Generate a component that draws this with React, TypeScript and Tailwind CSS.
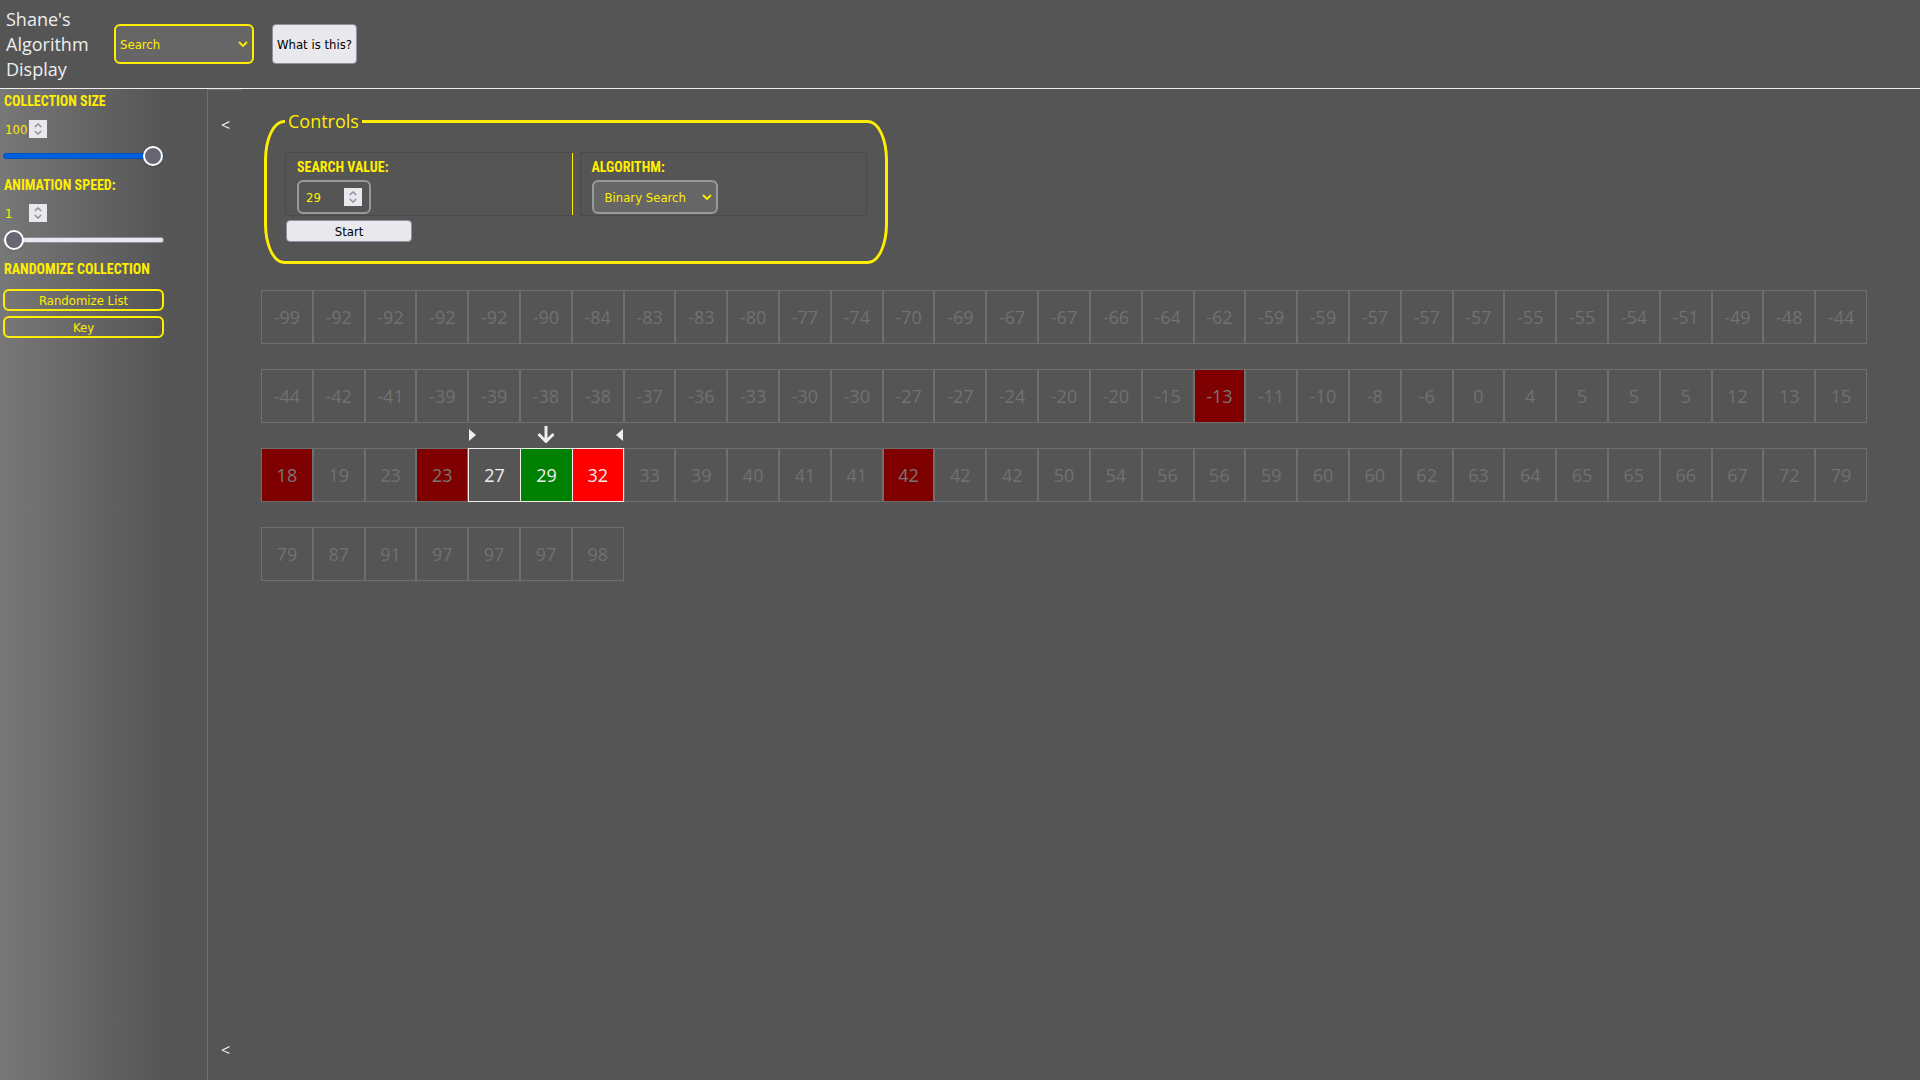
import { useState } from "react";

const values = [
  -99, -92, -92, -92, -92, -90, -84, -83, -83, -80, -77, -74, -70, -69, -67, -67, -66, -64, -62, -59, -59, -57, -57,
  -57, -55, -55, -54, -51, -49, -48, -44,
  -44, -42, -41, -39, -39, -38, -38, -37, -36, -33, -30, -30, -27, -27, -24, -20, -20, -15, -13, -11, -10, -8, -6, 0,
  4, 5, 5, 5, 12, 13, 15,
  18, 19, 23, 23, 27, 29, 32, 33, 39, 40, 41, 41, 42, 42, 42, 50, 54, 56, 56, 59, 60, 60, 62, 63, 64, 65, 65, 66, 67,
  72, 79,
  79, 87, 91, 97, 97, 97, 98,
];

const LOW = 66;
const MID = 67;
const HIGH = 68;
const visited = [49, 62, 65, 74];

function cellStyle(i: number) {
  if (i === LOW) return "border-y border-l border-[#eeeeee] text-[#eeeeee]";
  if (i === MID) return "border-y border-l border-[#eeeeee] bg-[#008000] text-[#eeeeee]";
  if (i === HIGH) return "border border-[#eeeeee] bg-[#ff0000] text-[#eeeeee]";
  if (visited.includes(i)) return "border border-[#6e6e6e] bg-[#7f0000] text-[#777777]";
  return "border border-[#6e6e6e] text-[#717171]";
}

const small = "font-['DejaVu_Sans_Condensed','DejaVu_Sans',sans-serif] text-[13px]";
const heading = "font-['Roboto_Condensed','Roboto',sans-serif] text-[14px] font-bold uppercase text-[#ffee00]";

function Chevron({ className }: { className: string }) {
  return (
    <svg viewBox="0 0 10 6" className={className} fill="none" stroke="currentColor" strokeWidth="1.8" aria-hidden="true">
      <path d="M1 1l4 4 4-4" />
    </svg>
  );
}

function Spinner() {
  return (
    <span className="flex size-[18px] shrink-0 flex-col items-center justify-between bg-[#e9e9ed] py-[3px] text-[#8f8f9d]">
      <Chevron className="h-[5px] w-[8px] rotate-180" />
      <Chevron className="h-[5px] w-[8px]" />
    </span>
  );
}

const slider =
  "block h-5 w-full appearance-none bg-transparent [&::-webkit-slider-runnable-track]:h-1.5 [&::-webkit-slider-runnable-track]:rounded-full [&::-webkit-slider-runnable-track]:border [&::-webkit-slider-thumb]:-mt-2 [&::-webkit-slider-thumb]:size-5 [&::-webkit-slider-thumb]:appearance-none [&::-webkit-slider-thumb]:rounded-full [&::-webkit-slider-thumb]:border-2 [&::-webkit-slider-thumb]:border-white [&::-webkit-slider-thumb]:bg-[#676774] [&::-webkit-slider-thumb]:shadow";

function SliderField(props: { id: string; label: string; min: number; value: string; track: string; onChange: (v: string) => void }) {
  const { id, label, min, value, track, onChange } = props;
  return (
    <div className="h-[84px]">
      <label htmlFor={id} className={`${heading} block h-[30px] pl-px leading-[23px]`}>
        {label}
      </label>
      <div className="flex items-center">
        <input
          id={id}
          inputMode="numeric"
          value={value}
          onChange={(e) => onChange(e.target.value)}
          className={`${small} h-[18px] w-[26px] bg-transparent pt-px pl-0.5 text-[#ffee00]`}
        />
        <Spinner />
      </div>
      <input
        type="range"
        aria-label={label}
        min={min}
        max={100}
        value={value}
        onChange={(e) => onChange(e.target.value)}
        className={`${slider} ${track} mt-2`}
      />
    </div>
  );
}

export default function App() {
  const [size, setSize] = useState("100");
  const [speed, setSpeed] = useState("1");
  const [target, setTarget] = useState("29");

  return (
    <div className="flex min-h-screen flex-col bg-[#555555] font-['Open_Sans','Noto_Sans',sans-serif] text-[#eeeeee]">
      <header className="flex h-[89px] items-center border-b border-[#eeeeee] pl-1.5">
        <h1 className="w-[108px] pr-4 text-[18px] leading-[25px]">Shane's Algorithm Display</h1>
        <div className="relative w-[140px]">
          <select
            aria-label="Display type"
            className={`${small} h-10 w-full appearance-none rounded-md border-2 border-[#ffee00] bg-[#666666] pt-px pl-1 text-[#ffee00]`}
          >
            <option>Search</option>
          </select>
          <Chevron className="pointer-events-none absolute top-[17px] right-1.5 h-[6px] w-[10px] text-[#ffee00]" />
        </div>
        <button className={`${small} ml-[18px] h-10 w-[85px] rounded border border-[#8f8f9d] bg-[#e9e9ed] pt-px whitespace-nowrap text-black`}>
          What is this?
        </button>
      </header>

      <div className="flex grow">
        <aside className="w-[207px] bg-linear-to-r from-[#787878] to-[#555555] to-[165px] pt-px pl-[3px]">
          <div className="w-[161px]">
            <SliderField
              id="size"
              label="Collection Size"
              min={1}
              value={size}
              onChange={setSize}
              track="[&::-webkit-slider-runnable-track]:border-[#0250bb] [&::-webkit-slider-runnable-track]:bg-[#0060df]"
            />
            <SliderField
              id="speed"
              label="Animation Speed:"
              min={1}
              value={speed}
              onChange={setSpeed}
              track="[&::-webkit-slider-runnable-track]:border-[#8f8f9d] [&::-webkit-slider-runnable-track]:bg-[#e9e9ed]"
            />
            <h2 className={`${heading} h-[31px] pl-px leading-[23px] whitespace-nowrap`}>Randomize Collection</h2>
            <div className="flex flex-col gap-[5px]">
              <button className={`${small} h-[22px] rounded-md border-2 border-[#ffee00] pt-px leading-[18px] text-[#ffee00]`}>
                Randomize List
              </button>
              <button className={`${small} h-[22px] rounded-md border-2 border-[#ffee00] pt-px leading-[18px] text-[#ffee00]`}>
                Key
              </button>
            </div>
          </div>
        </aside>

        <button
          aria-label="Collapse side panel"
          className="flex w-[35px] flex-col items-start justify-between border-t border-l border-[#6f6f6f] pt-[19px] pb-[14px] pl-[13px] text-[16px] leading-8"
        >
          <span>&lt;</span>
          <span>&lt;</span>
        </button>

        <main className="grow pt-[19px] pr-[53px] pl-[19px]">
          <fieldset className="ml-[3px] w-[624px] rounded-[20px/40px] border-3 border-[#ffee00] px-[18px] pb-[19px]">
            <legend className="px-[3px] text-[18px] leading-[27px] text-[#ffee00]">Controls</legend>
            <div className="mt-[17px] grid grid-cols-2 gap-[7px]">
              <div className="h-16 border border-r-0 border-[#4a4a4a]">
                <div className="h-full border-r border-[#ffee00] pl-[11px]">
                  <label htmlFor="target" className={`${heading} block h-[27px] leading-[28px]`}>
                    Search Value:
                  </label>
                  <div className="flex h-[34px] w-[74px] items-center justify-between rounded-md border-2 border-[#999999] px-[7px]">
                    <input
                      id="target"
                      inputMode="numeric"
                      value={target}
                      onChange={(e) => setTarget(e.target.value)}
                      className={`${small} w-8 bg-transparent pt-px text-[#ffee00]`}
                    />
                    <Spinner />
                  </div>
                </div>
              </div>
              <div className="h-16 border border-[#4a4a4a] pl-[11px]">
                <label htmlFor="algorithm" className={`${heading} block h-[27px] leading-[28px]`}>
                  Algorithm:
                </label>
                <div className="relative w-[126px]">
                  <select
                    id="algorithm"
                    className={`${small} h-[34px] w-full appearance-none rounded-md border-2 border-[#999999] bg-[#666666] pt-px pl-[11px] text-[#ffee00]`}
                  >
                    <option>Binary Search</option>
                  </select>
                  <Chevron className="pointer-events-none absolute top-[14px] right-1.5 h-[6px] w-[10px] text-[#ffee00]" />
                </div>
              </div>
            </div>
            <button className={`${small} mt-1 ml-px block h-[22px] w-[126px] rounded border border-[#8f8f9d] bg-[#e9e9ed] pt-px leading-5 text-black`}>
              Start
            </button>
          </fieldset>

          <div className="mt-[26px] grid grid-cols-[repeat(31,minmax(0,1fr))] gap-y-[25px]">
            {values.map((value, i) => (
              <div key={i} className={`relative flex h-[54px] items-center justify-center pt-px text-[18px] ${cellStyle(i)}`}>
                {i === LOW && (
                  <svg viewBox="0 0 7 12" className="absolute -top-5 left-0 h-3 w-[7px] fill-[#eeeeee]" aria-hidden="true">
                    <path d="M0 0l7 6-7 6z" />
                  </svg>
                )}
                {i === MID && (
                  <svg
                    viewBox="0 0 18 18"
                    className="absolute -top-[23px] size-[18px] fill-none stroke-[#eeeeee] stroke-3"
                    aria-hidden="true"
                  >
                    <path d="M9 0v15M1.5 8L9 15.5 16.5 8" />
                  </svg>
                )}
                {i === HIGH && (
                  <svg viewBox="0 0 7 12" className="absolute -top-5 right-0 h-3 w-[7px] fill-[#eeeeee]" aria-hidden="true">
                    <path d="M7 0L0 6l7 6z" />
                  </svg>
                )}
                {value}
              </div>
            ))}
          </div>
        </main>
      </div>
    </div>
  );
}
